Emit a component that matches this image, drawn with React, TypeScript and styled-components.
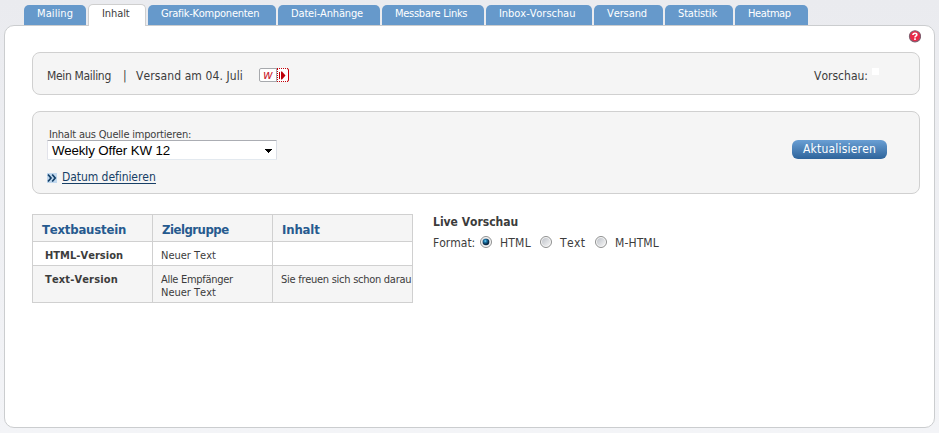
import React from 'react';
import styled, { createGlobalStyle } from 'styled-components';

const GlobalStyle = createGlobalStyle`
  *, *::before, *::after { box-sizing: border-box; }
  html { height: 100%; background: #f3f4f7; }
  body {
    margin: 0;
    height: 433px;
    overflow: hidden;
    background: linear-gradient(#eaebef, #f3f4f7);
    font-family: "DejaVu Sans Condensed", "DejaVu Sans", sans-serif;
    font-stretch: condensed;
    font-kerning: none;
    font-size: 12px;
    line-height: 16px;
    color: #3c3c3c;
  }
`;

const Page = styled.div`
  height: 433px;
  display: flex;
  flex-direction: column;
  padding: 4px 4px 5px;
`;

const Label = styled.span<{ $ls?: number }>`
  letter-spacing: ${(p) => p.$ls ?? 0}px;
  white-space: nowrap;
`;

const Tabs = styled.nav`
  display: flex;
  align-items: flex-end;
  gap: 2px;
  height: 21px;
  padding-left: 20px;
`;

const Tab = styled.a<{ $width: number; $active?: boolean }>`
  width: ${(p) => p.$width}px;
  height: ${(p) => (p.$active ? 22 : 20)}px;
  margin-bottom: ${(p) => (p.$active ? -1 : 0)}px;
  padding: 1px 0 0 13px;
  border: 1px solid #cfcfcf;
  border-width: ${(p) => (p.$active ? '1px 1px 0' : '0')};
  border-radius: 5px 5px 0 0;
  background: ${(p) => (p.$active ? '#fff' : '#6699cb')};
  color: ${(p) => (p.$active ? '#3c3c3c' : '#fff')};
  font-size: 11px;
  z-index: 1;
`;

const Panel = styled.main`
  flex: 1;
  width: 931px;
  padding: 4px 14px 0 27px;
  border: 1px solid #cbcdcf;
  border-radius: 10px;
  background: #fff;
`;

const HelpRow = styled.div`
  display: flex;
  justify-content: flex-end;
  height: 22px;
  margin-right: -1px;
`;

const Box = styled.section<{ $height: number }>`
  display: flex;
  justify-content: space-between;
  width: 888px;
  height: ${(p) => p.$height}px;
  border: 1px solid #d0d0d0;
  border-radius: 8px;
  background: #f5f5f5;

  & + & { margin-top: 16px; }
`;

const InfoLine = styled.div`
  display: flex;
  align-items: flex-start;
  padding: 15px 0 0 14px;
`;

const BoxTitle = styled.span`
  width: 65px;
`;

const Separator = styled.span`
  width: 24px;
  padding-left: 11px;
`;

const Dispatch = styled.span`
  width: 107px;
`;

const FlagButton = styled.span`
  display: flex;
  margin-left: 16px;
`;

const PreviewLabel = styled.div`
  display: flex;
  padding: 15px 40px 0 0;
`;

const Thumb = styled.span`
  width: 7px;
  height: 7px;
  margin-left: 4px;
  background: #fff;
`;

const Import = styled.div`
  padding: 15px 0 0 14px;
`;

const FieldName = styled.label`
  display: block;
  height: 13px;
  padding-left: 2px;
  font-size: 11px;
  line-height: 15px;
`;

const Select = styled.div`
  display: flex;
  justify-content: space-between;
  align-items: center;
  width: 230px;
  height: 20px;
  padding: 1px 4px 0;
  border: 1px solid;
  border-color: #abadb3 #dbdfe6 #e3e9ef #e2e3ea;
  border-radius: 1px;
  background: #fff;
  color: #000;
  font: 13.33px/18px "Liberation Sans", Arial, sans-serif;
`;

const LinkLine = styled.div`
  display: flex;
  gap: 5px;
  margin-top: 9px;
`;

const LinkText = styled.a`
  color: #173f66;
  border-bottom: 1px solid #173f66;
  height: 15px;
`;

const UpdateButton = styled.button`
  width: 95px;
  height: 19px;
  margin: 28px 32px 0 0;
  padding: 0;
  border: 0;
  border-radius: 6px;
  background: linear-gradient(#6a9fd4, #2e649b);
  color: #fff;
  font: inherit;
  font-kerning: none;
  line-height: 17px;
`;

const Columns = styled.div`
  display: flex;
  gap: 20px;
  margin-top: 20px;
`;

const Table = styled.div`
  display: grid;
  grid-template-columns: 120px 120px 140px;
  grid-template-rows: 27px 24px 37px;
  width: 381px;
  border: solid #d0d0d0;
  border-width: 1px 0 0 1px;
`;

const Cell = styled.div<{ $shade?: boolean; $bold?: boolean }>`
  overflow: hidden;
  padding: 7px 0 0 ${(p) => (p.$bold ? 12 : 8)}px;
  border: solid #d0d0d0;
  border-width: 0 1px 1px 0;
  background: ${(p) => (p.$shade ? '#f5f5f5' : '#fff')};
  font-size: 11px;
  font-weight: ${(p) => (p.$bold ? 'bold' : 'normal')};
  line-height: 13px;
  white-space: nowrap;
`;

const HeadCell = styled(Cell)`
  padding: 7px 0 0 9px;
  color: #265a8f;
  font-size: 13px;
  font-weight: bold;
  line-height: 16px;
`;

const Preview = styled.div`
  h3 { margin: 0 0 5px; font-size: 12px; line-height: 16px; }
`;

const Formats = styled.div`
  display: flex;
`;

const Option = styled.span<{ $width: number }>`
  display: flex;
  width: ${(p) => p.$width}px;
  gap: 8px;
`;

function HelpIcon() {
  return (
    <svg width="13" height="13" viewBox="0 0 13 13">
      <circle cx="7" cy="6.3" r="5.6" fill="#ea2848" stroke="#826070" strokeWidth="1.1" />
      <path d="M5 5V4.300Q5.200 3.200 7 3.200t1.800 1.500Q8.800 5.600 7.800 6.100 7 6.500 7 7.500M7 8.300v1.700" fill="none" stroke="#fff" strokeWidth="1.6" />
    </svg>
  );
}

const WorkflowLetter = styled.text`
  font: italic 12px "DejaVu Sans", sans-serif;
  fill: #c9202e;
`;

function WorkflowIcon() {
  return (
    <svg width="30" height="14" viewBox="0 0 30 14">
      <rect x=".5" y=".5" width="29" height="13" rx="1.5" fill="#fff" />
      <path d="M18 .5H2Q.5.5.5 2v10q0 1.500 1.500 1.500h16" fill="none" stroke="#a7a9ad" />
      <path d="M17.500 1v12" stroke="#a7a9ad" />
      <path d="M18 .5h11M18 13.500h11M18.500 1v12" stroke="#c4000a" strokeDasharray="1 1" />
      <path d="M28 .5q1.500 0 1.500 1.500v10q0 1.500-1.500 1.500" fill="none" stroke="#c4000a" />
      <WorkflowLetter x="4" y="11">w</WorkflowLetter>
      <path d="M20 4h1v7h-1zM22 3.500h1l3.500 4-3.500 4h-1z" fill="#bd000a" />
    </svg>
  );
}

function Arrow() {
  return (
    <svg width="7" height="4" viewBox="0 0 7 4" shapeRendering="crispEdges">
      <path d="M0 0h7v1H6v1H5v1H4v1H3V3H2V2H1V1H0z" fill="#000" />
    </svg>
  );
}

const ChevronSvg = styled.svg`
  margin-top: 4px;
`;

function Chevrons() {
  return (
    <ChevronSvg width="10" height="10" viewBox="0 0 10 10">
      <path d="M0 0h10v10H0z" fill="#c1d8ee" />
      <path d="M1 1.500 4 5 1 8.500M5.200 1.500l3 3.500-3 3.500" fill="none" stroke="#123f68" strokeWidth="1.700" />
    </ChevronSvg>
  );
}

const RadioSvg = styled.svg`
  flex: none;
  margin-top: 1px;
`;

function Radio({ checked }: { checked?: boolean }) {
  return (
    <RadioSvg width="12" height="12" viewBox="0 0 12 12">
      <defs>
        <linearGradient id="radioFace" x2="1" y2="1">
          <stop stopColor="#bfc3ca" />
          <stop offset="1" stopColor="#f4f4f4" />
        </linearGradient>
        <radialGradient id="radioDot" cx=".4" cy=".35">
          <stop stopColor="#83d8f8" />
          <stop offset=".4" stopColor="#1b7aae" />
          <stop offset="1" stopColor="#0b2c48" />
        </radialGradient>
      </defs>
      <circle cx="6" cy="6" r="5.500" fill="#f7f7f7" stroke="#8e8f8f" />
      <circle cx="6" cy="6" r="4" fill="url(#radioFace)" />
      {checked && <circle cx="6" cy="6" r="3.300" fill="url(#radioDot)" />}
    </RadioSvg>
  );
}

const tabs = [
  { name: 'Mailing', width: 62, ls: 0.1 },
  { name: 'Inhalt', width: 58, ls: -0.1, active: true },
  { name: 'Grafik-Komponenten', width: 128, ls: -0.25 },
  { name: 'Datei-Anhänge', width: 102, ls: -0.15 },
  { name: 'Messbare Links', width: 102, ls: -0.27 },
  { name: 'Inbox-Vorschau', width: 106, ls: -0.05 },
  { name: 'Versand', width: 69, ls: -0.1 },
  { name: 'Statistik', width: 68, ls: -0.15 },
  { name: 'Heatmap', width: 73, ls: -0.4 },
];

export default function App() {
  return (
    <>
      <GlobalStyle />
      <Page>
        <Tabs>
          {tabs.map((t) => (
            <Tab key={t.name} $width={t.width} $active={t.active}>
              <Label $ls={t.ls}>{t.name}</Label>
            </Tab>
          ))}
        </Tabs>
        <Panel>
          <HelpRow><HelpIcon /></HelpRow>
          <Box $height={43}>
            <InfoLine>
              <BoxTitle><Label $ls={-0.33}>Mein Mailing</Label></BoxTitle>
              <Separator>|</Separator>
              <Dispatch><Label $ls={0.1}>Versand am 04. Juli</Label></Dispatch>
              <FlagButton><WorkflowIcon /></FlagButton>
            </InfoLine>
            <PreviewLabel>
              <Label>Vorschau:</Label>
              <Thumb />
            </PreviewLabel>
          </Box>
          <Box $height={83}>
            <Import>
              <FieldName><Label $ls={-0.2}>Inhalt aus Quelle importieren:</Label></FieldName>
              <Select><Label $ls={-0.12}>Weekly Offer KW 12</Label><Arrow /></Select>
              <LinkLine>
                <Chevrons />
                <LinkText><Label $ls={-0.06}>Datum definieren</Label></LinkText>
              </LinkLine>
            </Import>
            <UpdateButton><Label $ls={0.2}>Aktualisieren</Label></UpdateButton>
          </Box>
          <Columns>
            <Table>
              <HeadCell $shade><Label $ls={-0.2}>Textbaustein</Label></HeadCell>
              <HeadCell $shade><Label $ls={-0.5}>Zielgruppe</Label></HeadCell>
              <HeadCell $shade><Label $ls={-0.15}>Inhalt</Label></HeadCell>
              <Cell $bold><Label $ls={0.03}>HTML-Version</Label></Cell>
              <Cell><Label>Neuer Text</Label></Cell>
              <Cell />
              <Cell $shade $bold><Label $ls={0.15}>Text-Version</Label></Cell>
              <Cell $shade>
                <Label $ls={-0.3}>Alle Empfänger</Label><br />
                <Label>Neuer Text</Label>
              </Cell>
              <Cell $shade><Label $ls={-0.27}>Sie freuen sich schon darau</Label></Cell>
            </Table>
            <Preview>
              <h3><Label>Live Vorschau</Label></h3>
              <Formats>
                <Option $width={47}><Label>Format:</Label></Option>
                <Option $width={60}><Radio checked /><Label $ls={0.2}>HTML</Label></Option>
                <Option $width={55}><Radio /><Label $ls={0.4}>Text</Label></Option>
                <Option $width={70}><Radio /><Label $ls={0.1}>M-HTML</Label></Option>
              </Formats>
            </Preview>
          </Columns>
        </Panel>
      </Page>
    </>
  );
}
